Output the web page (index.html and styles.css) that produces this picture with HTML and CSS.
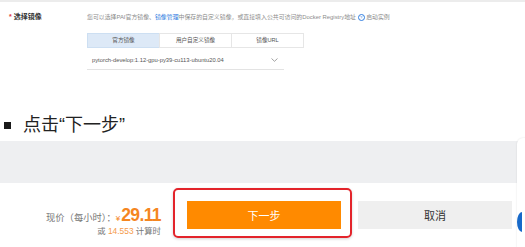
FILE: index.html
```html
<!DOCTYPE html>
<html lang="zh-CN">
<head>
    <meta charset="UTF-8">
    <meta name="viewport" content="width=device-width, initial-scale=1.0">
    <title>选择镜像</title>
    <link rel="stylesheet" href="styles.css">
</head>
<body>

<div class="page">
    <div class="topline"></div>

    <!-- Image selection -->
    <div class="form-row">
        <div class="form-label"><span class="required">*</span>选择镜像</div>
        <div class="form-body">
            <div class="hint">
                您可以选择PAI官方镜像、<span class="link">镜像管理</span>中保存的自定义镜像，或直接填入公共可访问的Docker Registry地址
                <span class="help">?</span> 启动实例
            </div>
            <div class="tabs">
                <div class="tab active">官方镜像</div>
                <div class="tab">用户自定义镜像</div>
                <div class="tab">镜像URL</div>
            </div>
            <div class="select">
                <span>pytorch-develop:1.12-gpu-py39-cu113-ubuntu20.04</span>
                <svg class="chevron" width="7" height="4" viewBox="0 0 7 4">
                    <path d="M0.5 0.5 L3.5 3.3 L6.5 0.5" fill="none" stroke="#8a8a8a" stroke-width="0.8"/>
                </svg>
            </div>
        </div>
    </div>

    <!-- Step -->
    <div class="step">
        <span class="bullet"></span>
        <span class="step-text">点击“下一步”</span>
    </div>

    <div class="band"></div>

    <!-- Footer -->
    <div class="footer">
        <div class="price">
            <div class="price-main">
                <span class="price-label">现价（每小时）：</span><span class="yen">¥</span><span class="amount">29.11</span>
            </div>
            <div class="price-sub">或 <span class="orange">14.553</span> 计算时</div>
        </div>
        <div class="highlight">
            <button class="btn-next">下一步</button>
        </div>
        <button class="btn-cancel">取消</button>
    </div>

    <div class="side-panel"></div>
    <div class="side-dot"></div>
</div>

</body>
</html>
```

FILE: styles.css
```css
body {
    margin: 0;
    background: #fff;
    font-family: "Liberation Sans", "Noto Sans CJK SC", sans-serif;
    color: #333;
}
.page {
    position: relative;
    width: 525px;
    height: 247px;
    overflow: hidden;
}
.topline {
    height: 2px;
    background: #ececec;
}
.form-row {
    display: flex;
    margin-top: 8px;
}
.form-label {
    width: 87px;
    padding-left: 9px;
    box-sizing: border-box;
    font-size: 7px;
    line-height: 14px;
    font-weight: bold;
    color: #333;
}
.required {
    color: #e0393e;
    margin-right: 2px;
}
.form-body {
    display: flex;
    flex-direction: column;
}
.hint {
    font-size: 5.9px;
    line-height: 14px;
    color: #8c8c8c;
    white-space: nowrap;
}
.link {
    color: #2f7de1;
}
.help {
    display: inline-block;
    width: 5px;
    height: 5px;
    line-height: 5px;
    border: 0.6px solid #2f7de1;
    border-radius: 50%;
    color: #2f7de1;
    font-size: 4px;
    text-align: center;
    vertical-align: middle;
}
.tabs {
    display: flex;
    margin-top: 9px;
}
.tab {
    width: 73px;
    height: 15px;
    box-sizing: border-box;
    border: 1px solid #e6e6e6;
    margin-left: -1px;
    font-size: 5.6px;
    line-height: 13px;
    text-align: center;
    color: #555;
}
.tab:first-child {
    margin-left: 0;
}
.tab.active {
    background: #dde9f7;
    border-color: #cddff2;
}
.select {
    width: 197px;
    height: 22px;
    box-sizing: border-box;
    border-bottom: 1px solid #e3e3e3;
    padding: 8px 6px 0 5px;
    display: flex;
    justify-content: space-between;
    align-items: flex-start;
    font-size: 5.8px;
    line-height: 8px;
    color: #555;
    white-space: nowrap;
}
.chevron {
    margin-top: 2px;
}
.step {
    display: flex;
    align-items: center;
    margin-top: 43px;
    height: 24px;
}
.bullet {
    width: 7px;
    height: 7px;
    background: #1a1a1a;
    margin-left: 4px;
    margin-right: 12px;
}
.step-text {
    font-size: 18px;
    line-height: 24px;
    color: #222;
}
.band {
    margin-top: 4px;
    height: 42px;
    background: #eeeff1;
}
.footer {
    display: flex;
    align-items: flex-start;
    padding-top: 5px;
}
.price {
    width: 161px;
    margin-top: 17px;
    text-align: right;
}
.price-main {
    height: 20px;
    line-height: 20px;
    white-space: nowrap;
}
.price-label {
    font-size: 9.3px;
    color: #777;
}
.yen {
    font-size: 8px;
    color: #f5861f;
    margin-right: 1px;
}
.amount {
    font-size: 17.5px;
    font-weight: bold;
    color: #f5861f;
    letter-spacing: -0.6px;
}
.price-sub {
    font-size: 8.4px;
    line-height: 12px;
    color: #777;
}
.orange {
    color: #f59a4a;
}
.highlight {
    margin-left: 12px;
    padding: 11px 9px 7px 12px;
    border: 2px solid #e3242b;
    border-radius: 5px;
    box-shadow: 0 1px 3px rgba(0, 0, 0, 0.18);
}
.btn-next {
    display: block;
    width: 154px;
    height: 28px;
    border: none;
    background: #ff8a00;
    color: #fff;
    font-family: "Noto Sans CJK SC", sans-serif;
    font-size: 11px;
    padding: 0;
}
.btn-cancel {
    margin-left: 6px;
    margin-top: 13px;
    width: 154px;
    height: 28px;
    border: none;
    background: #efefef;
    color: #333;
    font-family: "Noto Sans CJK SC", sans-serif;
    font-size: 11px;
    padding: 0;
}
.side-panel {
    position: absolute;
    left: 517px;
    top: 138px;
    width: 20px;
    height: 120px;
    background: #fff;
    border-radius: 6px;
    box-shadow: 0 0 2px rgba(0, 0, 0, 0.12);
}
.side-dot {
    position: absolute;
    left: 517px;
    top: 212px;
    width: 5px;
    height: 20px;
    border-radius: 5px 0 0 5px / 10px 0 0 10px;
    background: #1769c9;
}
```
